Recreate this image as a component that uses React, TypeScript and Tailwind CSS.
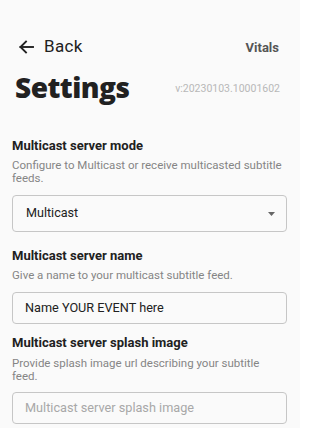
import React from "react";

export default function App() {
  return (
    <div className="w-[300px] h-[428px] overflow-hidden bg-[#fafafa] text-[#212121]" style={{ fontFamily: "Roboto, 'Liberation Sans', sans-serif" }}>
      <div className="flex items-center justify-between pl-[19px] pr-[21px] pt-[38px] h-[55px]">
        <div className="flex items-center gap-[10px]">
          <svg width="15" height="14" viewBox="0 0 15 14" fill="none" stroke="#212121" strokeWidth="1.9" strokeLinecap="square" className="mt-[1px]">
            <path d="M1.5 7h12.5" />
            <path d="M7 1.5L1.5 7 7 12.5" />
          </svg>
          <span className="text-[17px] leading-[17px] tracking-[0.3px] h-[17px]">Back</span>
        </div>
        <span className="text-[13px] font-bold text-[#555] leading-[13px] mt-[2px]">Vitals</span>
      </div>
      <div className="flex items-start justify-between pl-[15px] pr-[20px] mt-[18px] h-[28px]">
        <span className="text-[28px] font-extrabold leading-[28px] tracking-[-0.5px]" style={{ fontFamily: "'Open Sans', sans-serif" }}>Settings</span>
        <span className="text-[10.5px] text-[#b8b8b8] leading-[10.5px] mt-[11px]">v:20230103.10001602</span>
      </div>

      <div className="pl-[12px] pr-[13px] mt-[37px]">
        <div className="text-[13px] font-bold leading-[16px]">Multicast server mode</div>
        <div className="text-[11.5px] text-[#858585] leading-[13px] mt-[5px]">Configure to Multicast or receive multicasted subtitle feeds.</div>
        <div className="mt-[10px] h-[37px] border border-[#c6c6c6] rounded-[4px] flex items-center justify-between pl-[13px] pr-[11px]">
          <span className="text-[12.6px] text-[#212121]">Multicast</span>
          <svg width="7" height="4" viewBox="0 0 7 4"><path d="M0 0h7L3.5 4z" fill="#666" /></svg>
        </div>

        <div className="text-[13px] font-bold leading-[16px] mt-[16px]">Multicast server name</div>
        <div className="text-[11.5px] text-[#858585] leading-[13px] mt-[5px]">Give a name to your multicast subtitle feed.</div>
        <div className="mt-[10px] h-[32px] border border-[#c6c6c6] rounded-[4px] flex items-center pl-[12px]">
          <span className="text-[12.7px] text-[#212121]">Name YOUR EVENT here</span>
        </div>

        <div className="text-[13px] font-bold leading-[16px] mt-[11px]">Multicast server splash image</div>
        <div className="text-[11.5px] text-[#858585] leading-[13px] mt-[6px] pr-[8px]">Provide splash image url describing your subtitle feed.</div>
        <div className="mt-[9px] h-[32px] border border-[#c6c6c6] rounded-[4px] flex items-center pl-[12px]">
          <span className="text-[12.7px] text-[#a8a8a8]">Multicast server splash image</span>
        </div>
      </div>
    </div>
  );
}
